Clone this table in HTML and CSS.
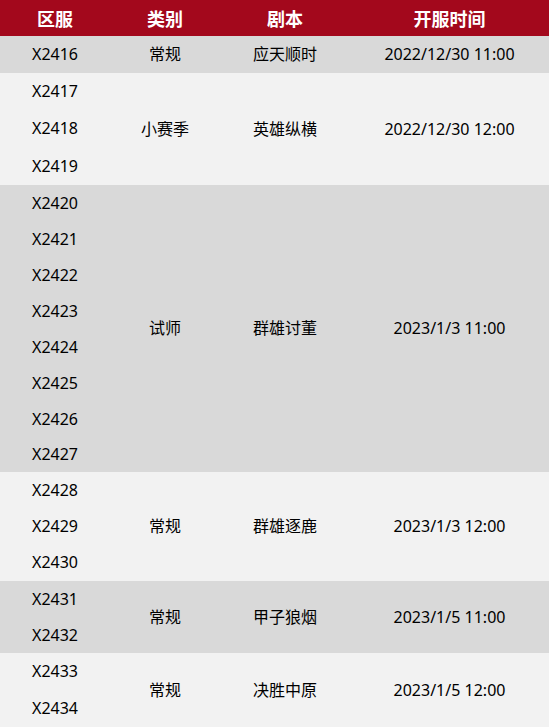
FILE: index.html
```html
<!DOCTYPE html>
<html lang="zh-CN">
<head>
<meta charset="utf-8">
<title>开服时间表</title>
<link rel="stylesheet" href="styles.css">
</head>
<body>
<table class="schedule">
  <colgroup>
    <col class="c-zone">
    <col class="c-type">
    <col class="c-script">
    <col class="c-time">
  </colgroup>
  <thead>
    <tr class="head">
      <th>区服</th><th>类别</th><th>剧本</th><th>开服时间</th>
    </tr>
  </thead>
  <tbody>
    <tr class="dark h37"><td>X2416</td><td>常规</td><td>应天顺时</td><td>2022/12/30 11:00</td></tr>

    <tr class="light h37"><td>X2417</td><td rowspan="3">小赛季</td><td rowspan="3">英雄纵横</td><td rowspan="3">2022/12/30 12:00</td></tr>
    <tr class="light h37"><td>X2418</td></tr>
    <tr class="light h38"><td>X2419</td></tr>

    <tr class="dark h36"><td>X2420</td><td rowspan="8">试师</td><td rowspan="8">群雄讨董</td><td rowspan="8">2023/1/3 11:00</td></tr>
    <tr class="dark h36"><td>X2421</td></tr>
    <tr class="dark h36"><td>X2422</td></tr>
    <tr class="dark h36"><td>X2423</td></tr>
    <tr class="dark h36"><td>X2424</td></tr>
    <tr class="dark h36"><td>X2425</td></tr>
    <tr class="dark h36"><td>X2426</td></tr>
    <tr class="dark h35"><td>X2427</td></tr>

    <tr class="light h36"><td>X2428</td><td rowspan="3">常规</td><td rowspan="3">群雄逐鹿</td><td rowspan="3">2023/1/3 12:00</td></tr>
    <tr class="light h36"><td>X2429</td></tr>
    <tr class="light h37"><td>X2430</td></tr>

    <tr class="dark h36"><td>X2431</td><td rowspan="2">常规</td><td rowspan="2">甲子狼烟</td><td rowspan="2">2023/1/5 11:00</td></tr>
    <tr class="dark h36"><td>X2432</td></tr>

    <tr class="light h37"><td>X2433</td><td rowspan="2">常规</td><td rowspan="2">决胜中原</td><td rowspan="2">2023/1/5 12:00</td></tr>
    <tr class="light h37"><td>X2434</td></tr>
  </tbody>
</table>
</body>
</html>
```

FILE: styles.css
```css
html, body {
  margin: 0;
  padding: 0;
  background: #f2f2f2;
}

.schedule {
  width: 549px;
  border-collapse: collapse;
  border-spacing: 0;
  table-layout: fixed;
  font-family: "Noto Sans", "Noto Sans CJK SC", sans-serif;
  font-size: 16px;
  color: #000;
}

.c-zone { width: 110px; }
.c-type { width: 110px; }
.c-script { width: 130px; }
.c-time { width: 199px; }

.schedule th,
.schedule td {
  padding: 0 0 1px;
  text-align: center;
  vertical-align: middle;
  line-height: 1;
  white-space: nowrap;
}

.head {
  height: 36px;
  background: #a3081c;
}

.head th {
  color: #ffffff;
  font-family: "Noto Sans CJK SC", sans-serif;
  font-size: 18px;
  font-weight: 700;
}

.dark { background: #d9d9d9; }
.light { background: #f2f2f2; }

.h35 { height: 35px; }
.h36 { height: 36px; }
.h37 { height: 37px; }
.h38 { height: 38px; }
```
